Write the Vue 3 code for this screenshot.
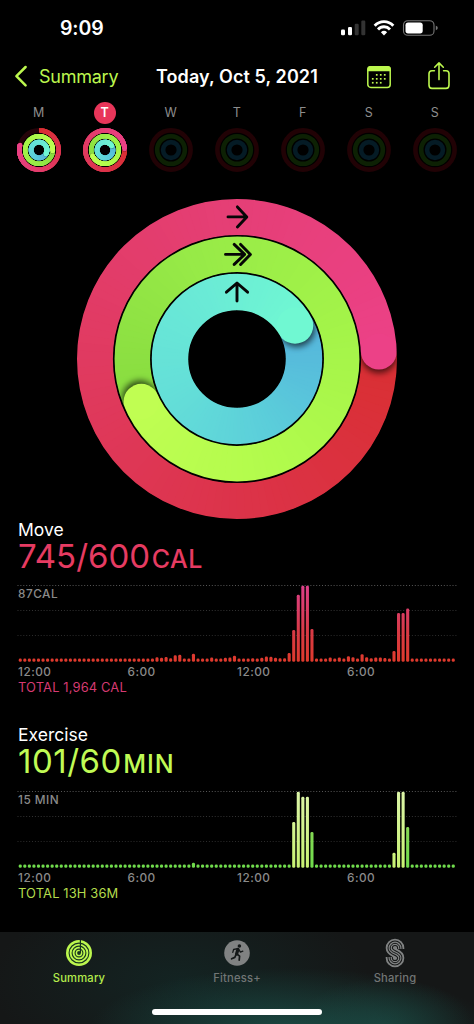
<script setup>
const PALETTE = {
  move: ['#d92f33', '#dc3349', '#e03a60', '#e53f76', '#ec4187'],
  exercise: ['#88dc40', '#97ea47', '#a3f349', '#b1fb4c', '#c0fe52'],
  stand: ['#55b4dc', '#5bcdda', '#64dfd8', '#6aead6', '#70f8d2'],
}

const rgb = (hex) => [1, 3, 5].map((i) => parseInt(hex.slice(i, i + 2), 16))

function mix(stops, t) {
  const pos = Math.min(Math.max(t, 0), 0.9999) * (stops.length - 1)
  const i = Math.floor(pos)
  const a = rgb(stops[i])
  const b = rgb(stops[i + 1])
  return `rgb(${a.map((v, k) => Math.round(v + (b[k] - v) * (pos - i))).join(',')})`
}

function polar(r, deg) {
  const a = (deg * Math.PI) / 180
  return { x: +(r * Math.sin(a)).toFixed(3), y: +(-r * Math.cos(a)).toFixed(3) }
}

function arc(r, from, to) {
  const p = polar(r, from)
  const q = polar(r, to)
  return `M${p.x} ${p.y}A${r} ${r} 0 0 1 ${q.x} ${q.y}`
}

/* Splits a progress ring into short arcs so that its colour follows the angle. */
function makeRing(name, r, w, degrees) {
  const stops = PALETTE[name]
  const start = Math.max(0, degrees - 360)
  const span = degrees - start
  const step = 3
  const overlap = r < 30 ? 8 : 2
  const parts = []
  for (let a = start; a < degrees; a += step) {
    const end = Math.min(a + step + overlap, degrees)
    parts.push({ d: arc(r, a, end), color: mix(stops, (a - start) / span) })
  }
  return {
    name, r, w, parts,
    track: { move: '#25040a', exercise: '#0d2505', stand: '#04222a' }[name],
    front: parts.slice(-20),
    cap: polar(r, degrees),
    shade: polar(r, degrees + (180 / Math.PI) * (w * 0.1 / r)),
    capColor: mix(stops, 1),
    lapped: degrees > 360,
  }
}

const bigRings = [
  makeRing('move', 142.05, 35.9, 447),
  makeRing('exercise', 104.7, 35.5, 606),
  makeRing('stand', 67, 36.5, 420),
]

const days = [
  { letter: 'M', rings: [makeRing('move', 19.6, 4.6, 285), makeRing('exercise', 13.8, 4.5, 455), makeRing('stand', 7.9, 4.9, 480)] },
  { letter: 'T', today: true, rings: [makeRing('move', 19.6, 4.6, 447), makeRing('exercise', 13.8, 4.5, 606), makeRing('stand', 7.9, 4.9, 420)] },
  { letter: 'W' },
  { letter: 'T' },
  { letter: 'F' },
  { letter: 'S' },
  { letter: 'S' },
]

function bars(base, values) {
  return Array.from({ length: 96 }, (_, i) => ({ x: 18.7 + i * 4.558, h: values[i] ?? base }))
}

const charts = [
  {
    id: 'move', title: 'Move', value: '745/600', unit: 'CAL', peak: '87CAL', total: 'TOTAL 1,964 CAL',
    bars: bars(3.2, {
      30: 4.5, 31: 4, 32: 4.8, 33: 3.5, 34: 6.5, 35: 7, 38: 8, 42: 4.2, 45: 4, 46: 4.3, 47: 6,
      51: 3.6, 53: 4, 54: 5.3, 55: 5, 56: 4, 57: 3.5, 58: 3.5, 59: 8.7, 60: 31.7, 61: 67, 62: 76, 63: 76, 64: 32.7,
      68: 4.4, 70: 4.4, 72: 5.6, 73: 4.6, 75: 7.6, 76: 4.6, 77: 3.6, 78: 4.4, 79: 4.4, 80: 3.7,
      82: 10.7, 83: 48.7, 84: 48.7, 85: 53.3,
    }),
  },
  {
    id: 'exercise', title: 'Exercise', value: '101/60', unit: 'MIN', peak: '15 MIN', total: 'TOTAL 13H 36M',
    bars: bars(3.4, { 38: 5, 60: 45.7, 61: 76, 62: 71, 63: 71, 64: 35.7, 82: 15, 83: 76, 84: 76, 85: 40.7 }),
  },
]

const brightBars = [60, 61, 62, 63, 82, 83, 84]

function barFill(id, i) {
  if (id === 'move') return 'url(#grad-move)'
  return brightBars.includes(i) ? 'url(#grad-bright)' : 'url(#grad-green)'
}

const hours = [
  { x: 18, text: '12:00' },
  { x: 127.5, text: '6:00' },
  { x: 237, text: '12:00' },
  { x: 347, text: '6:00' },
]
</script>

<template>
  <div class="phone">
    <header class="status">
      <span class="clock">9:09</span>
      <svg class="signals" width="100" height="22" viewBox="0 0 100 22">
        <rect x="1" y="11.5" width="4" height="5.7" rx="1.2" fill="#fff" />
        <rect x="8" y="9" width="4" height="8.2" rx="1.2" fill="#fff" />
        <rect x="14.7" y="5.8" width="4" height="11.4" rx="1.2" fill="#333" />
        <rect x="21.3" y="2.5" width="4" height="14.7" rx="1.2" fill="#333" />
        <g fill="none" stroke="#fff" stroke-width="2.9">
          <path d="M34.7 7.7A12.6 12.6 0 0 1 53.3 7.7" />
          <path d="M38 11.4A8.2 8.2 0 0 1 50 11.4" />
        </g>
        <path d="M44 17.5L40.9 14.2A4.6 4.6 0 0 1 47.1 14.2Z" fill="#fff" />
        <rect x="63.5" y="2.7" width="30.5" height="14.6" rx="4.4" fill="none" stroke="#767676" stroke-width="1.1" />
        <rect x="65.5" y="4.6" width="17.2" height="10.8" rx="2.6" fill="#fff" />
        <path d="M95.8 7.8Q97.8 8.4 97.8 10T95.8 12.2Z" fill="#767676" />
      </svg>
    </header>

    <nav class="nav">
      <svg class="chevron" width="14" height="24" viewBox="0 0 14 24">
        <path d="M11.6 3L2.4 12.2L11.6 21.4" fill="none" stroke="#bcf74e" stroke-width="2.5" stroke-linecap="round" stroke-linejoin="round" />
      </svg>
      <span class="back">Summary</span>
      <h1 class="date">Today, Oct 5, 2021</h1>
      <svg class="calendar" width="26" height="24" viewBox="0 0 26 24">
        <rect x="1.8" y="1.8" width="22.4" height="20.6" rx="3" fill="none" stroke="#bcf74e" stroke-width="1.5" />
        <path d="M1.2 6.2V4.2Q1.2 1.1 4.3 1.1H21.7Q24.8 1.1 24.8 4.2V6.2Z" fill="#bcf74e" />
        <g fill="#bcf74e">
          <rect v-for="n in 3" :key="'a' + n" :x="5.9 + n * 4" y="9" width="1.7" height="1.7" />
          <rect v-for="n in 4" :key="'b' + n" :x="1.9 + n * 4" y="13" width="1.7" height="1.7" />
          <rect v-for="n in 3" :key="'c' + n" :x="1.9 + n * 4" y="16.9" width="1.7" height="1.7" />
        </g>
      </svg>
      <svg class="share" width="24" height="30" viewBox="0 0 24 30">
        <g fill="none" stroke="#bcf74e" stroke-width="1.6" stroke-linecap="round" stroke-linejoin="round">
          <path d="M7.4 9.8H5Q2 9.8 2 12.8V24Q2 27.4 5 27.4H19Q22 27.4 22 24V12.8Q22 9.8 19 9.8H16.6" />
          <path d="M12 18.6V2.2M7.7 6.2L12 1.9L16.3 6.2" />
        </g>
      </svg>
    </nav>

    <section class="week">
      <div v-for="(day, i) in days" :key="i" class="day">
        <span class="letter" :class="{ today: day.today }">{{ day.letter }}</span>
        <svg width="46" height="46" viewBox="-23 -23 46 46">
          <template v-if="day.rings">
            <g v-for="ring in day.rings" :key="ring.name" fill="none" :stroke-width="ring.w">
              <circle :r="ring.r" :stroke="ring.track" />
              <path v-for="(p, k) in ring.parts" :key="k" :d="p.d" :stroke="p.color" />
              <circle v-if="ring.lapped" :cx="ring.shade.x" :cy="ring.shade.y" :r="ring.w / 2" stroke="none" fill="#000" fill-opacity=".35" />
              <path v-for="(p, k) in ring.front" :key="'f' + k" :d="p.d" :stroke="p.color" />
              <circle :cx="ring.cap.x" :cy="ring.cap.y" :r="ring.w / 2" stroke="none" :fill="ring.capColor" />
            </g>
          </template>
          <g v-else fill="none" stroke-width="4.6">
            <circle r="19.6" stroke="#210205" />
            <circle r="13.8" stroke="#0d2104" />
            <circle r="7.9" stroke="#051b25" />
          </g>
        </svg>
      </div>
    </section>

    <section class="rings">
      <svg width="322" height="322" viewBox="-161 -161 322 322">
        <defs>
          <filter id="soft" x="-50%" y="-50%" width="200%" height="200%">
            <feGaussianBlur stdDeviation="3.2" />
          </filter>
          <mask v-for="ring in bigRings" :id="'mask-' + ring.name" :key="ring.name" maskUnits="userSpaceOnUse" x="-161" y="-161" width="322" height="322">
            <circle :r="ring.r" fill="none" stroke="#fff" :stroke-width="ring.w" />
          </mask>
        </defs>
        <g v-for="ring in bigRings" :key="ring.name" :mask="`url(#mask-${ring.name})`" fill="none" :stroke-width="ring.w + 1">
          <path v-for="(p, k) in ring.parts" :key="k" :d="p.d" :stroke="p.color" />
          <circle :cx="ring.shade.x" :cy="ring.shade.y" :r="ring.w / 2" stroke="none" fill="#000" fill-opacity=".65" filter="url(#soft)" />
          <path v-for="(p, k) in ring.front" :key="'f' + k" :d="p.d" :stroke="p.color" />
          <circle :cx="ring.cap.x" :cy="ring.cap.y" :r="ring.w / 2" stroke="none" :fill="ring.capColor" />
        </g>
        <g fill="none" stroke="#060606" stroke-width="2.9" stroke-linecap="round" stroke-linejoin="round">
          <path d="M-9 -142.1H9.5M0.4 -152.1L9.8 -142.1L0.4 -132.1" />
          <path d="M-11.5 -104.6H7.5M-2.8 -114.6L7.6 -104.6L-2.8 -94.6M3.6 -114.6L13.4 -104.6L3.6 -94.6" />
          <path d="M0 -57.9V-75.4M-10.6 -66.8L0 -76L10.6 -66.8" />
        </g>
      </svg>
    </section>

    <section v-for="chart in charts" :key="chart.id" class="metric" :class="chart.id">
      <h2 class="name">{{ chart.title }}</h2>
      <p class="value">{{ chart.value }}<span class="unit">{{ chart.unit }}</span></p>
      <svg class="chart" width="474" height="108" viewBox="0 0 474 108">
        <defs>
          <linearGradient id="grad-move" gradientUnits="userSpaceOnUse" x1="0" y1="90" x2="0" y2="14">
            <stop offset="0" stop-color="#e03a2c" />
            <stop offset=".4" stop-color="#d83a45" />
            <stop offset="1" stop-color="#dc3f88" />
          </linearGradient>
          <linearGradient id="grad-green" gradientUnits="userSpaceOnUse" x1="0" y1="90" x2="0" y2="50">
            <stop offset="0" stop-color="#6fdc4c" />
            <stop offset="1" stop-color="#86d854" />
          </linearGradient>
          <linearGradient id="grad-bright" gradientUnits="userSpaceOnUse" x1="0" y1="90" x2="0" y2="14">
            <stop offset="0" stop-color="#c8f272" />
            <stop offset="1" stop-color="#dcf5a8" />
          </linearGradient>
        </defs>
        <g stroke-width="1" stroke-dasharray="1 1.9">
          <path d="M17.5 13.5H457" stroke="#575757" />
          <path d="M17.5 38.5H457" stroke="#333" />
          <path d="M17.5 63.5H457" stroke="#2c2c2c" />
        </g>
        <text class="peak" x="18" y="26">{{ chart.peak }}</text>
        <rect v-for="(b, i) in chart.bars" :key="i" :x="b.x" :y="89.8 - b.h" width="3.1" :height="b.h" rx="1.4" :fill="barFill(chart.id, i)" />
        <text v-for="(h, i) in hours" :key="'h' + i" class="hour" :x="h.x" y="104.4">{{ h.text }}</text>
      </svg>
      <p class="total">{{ chart.total }}</p>
    </section>

    <footer class="tabs">
      <div class="tab active">
        <svg width="28" height="30" viewBox="-14 -15 28 30">
          <circle r="13" fill="#bcf74e" />
          <g fill="none" stroke="#17331f" stroke-width="1.1">
            <circle r="9.9" />
            <circle r="6.9" />
            <circle r="3.9" />
          </g>
          <circle r="1.9" fill="#17331f" />
          <path d="M1.4 -13V0" stroke="#17331f" stroke-width="1.2" />
        </svg>
        <span>Summary</span>
      </div>
      <div class="tab">
        <svg width="28" height="30" viewBox="-14 -15 28 30">
          <circle r="12.8" fill="#808282" />
          <circle cx="2.4" cy="-7" r="1.8" fill="#141818" />
          <g fill="none" stroke="#141818" stroke-linecap="round" stroke-linejoin="round">
            <path d="M0.9 -3.6L-0.4 1" stroke-width="3.2" />
            <path d="M0.6 -4.4L-3.4 -3.5L-4.2 -0.6M1.9 -3.4L3.4 -0.9L5.8 -1.8" stroke-width="1.3" />
            <path d="M0.1 1.2L2.6 3.2L2.2 7.2M-1 1.6L-2.2 4.4L-5.4 5.8" stroke-width="1.7" />
          </g>
        </svg>
        <span>Fitness+</span>
      </div>
      <div class="tab">
        <svg width="28" height="30" viewBox="-5 -1 28 30">
          <mask id="track-lines" maskUnits="userSpaceOnUse" x="-2" y="-2" width="22" height="32">
            <g fill="none">
              <path v-for="(w, i) in [9, 5.4, 3.4]" :key="i" :stroke-width="w" :stroke="i % 2 ? '#000' : '#fff'" d="M13.8 9.9V9.1A4.8 4.8 0 0 0 4.2 9.1C4.2 14.8 13.8 13.2 13.8 18.9A4.8 4.8 0 0 1 4.2 18.9V18.1" />
              <path stroke="#000" stroke-width="1" d="M13.8 9.9V9.1A4.8 4.8 0 0 0 4.2 9.1C4.2 14.8 13.8 13.2 13.8 18.9A4.8 4.8 0 0 1 4.2 18.9V18.1" />
            </g>
          </mask>
          <rect x="-2" y="-2" width="22" height="32" fill="#808282" mask="url(#track-lines)" />
        </svg>
        <span>Sharing</span>
      </div>
      <div class="home"></div>
    </footer>
  </div>
</template>

<style>
html,
body {
  margin: 0;
  background: #000;
}
</style>

<style scoped>
.phone {
  width: 474px;
  height: 1024px;
  overflow: hidden;
  display: flex;
  flex-direction: column;
  background: #000;
  color: #fff;
  font-family: Inter, 'Liberation Sans', sans-serif;
}
h1,
h2,
p {
  margin: 0;
  font-weight: 400;
}
svg {
  display: block;
  flex: none;
}
.status {
  height: 56px;
  flex: none;
  display: flex;
  justify-content: space-between;
  box-sizing: border-box;
  padding: 18px 34px 0 60px;
}
.clock {
  font-size: 19.5px;
  line-height: 21px;
  font-weight: 600;
  letter-spacing: -0.1px;
}
.nav {
  height: 42px;
  flex: none;
  display: flex;
  align-items: center;
  padding-left: 14px;
  line-height: 42px;
}
.chevron {
  margin-top: -2px;
}
.back {
  width: 117px;
  padding-left: 11px;
  box-sizing: border-box;
  margin-right: 11px;
  font-size: 18px;
  letter-spacing: -0.25px;
  color: #bcf74e;
}
.date {
  width: 210px;
  font-size: 18px;
  font-weight: 600;
  letter-spacing: 0.08px;
  white-space: nowrap;
}
.share {
  margin-left: 35px;
  margin-top: -3px;
}
.week {
  height: 96px;
  flex: none;
  display: flex;
  padding-left: 5.7px;
}
.day {
  width: 66px;
  flex: none;
  display: flex;
  flex-direction: column;
  align-items: center;
  padding-top: 4px;
}
.letter {
  width: 22px;
  height: 22px;
  border-radius: 50%;
  line-height: 22px;
  text-align: center;
  font-size: 12.5px;
  color: #8d8d8d;
  margin-bottom: 3px;
}
.letter.today {
  background: #e8365a;
  color: #fff;
  font-weight: 600;
}
.rings {
  height: 325.6px;
  flex: none;
  display: flex;
  justify-content: center;
  align-items: flex-start;
}
.rings svg {
  margin-top: 3.8px;
}
.metric {
  height: 205.8px;
  flex: none;
}
.name {
  padding-left: 18px;
  font-size: 17.5px;
  line-height: 20px;
}
.value {
  padding-left: 18px;
  height: 32.4px;
  font-size: 33px;
  line-height: 33.4px;
  white-space: nowrap;
}
.unit {
  font-size: 25px;
  font-weight: 500;
  margin-left: 1.5px;
  letter-spacing: 0.6px;
}
.move .value {
  color: #e63b62;
}
.exercise .value {
  color: #c0fb55;
  letter-spacing: 0.5px;
}
.exercise .unit {
  letter-spacing: 0.9px;
}
.peak,
.hour {
  font-size: 11.8px;
  font-weight: 500;
  letter-spacing: 0.5px;
  fill: #8a8a8a;
}
.total {
  padding-left: 18px;
  font-size: 12.9px;
  line-height: 15.4px;
  letter-spacing: 0.15px;
}
.move .total {
  color: #d63a72;
}
.exercise .total {
  color: #b3dc4c;
}
.tabs {
  height: 92px;
  margin-top: auto;
  flex: none;
  position: relative;
  display: flex;
  background:
    radial-gradient(ellipse 200px 60px at 290px 96px, rgba(28, 86, 78, 0.75), rgba(28, 86, 78, 0) 100%),
    radial-gradient(ellipse 90px 50px at 385px 96px, rgba(28, 86, 78, 0.5), rgba(28, 86, 78, 0) 100%),
    radial-gradient(ellipse 190px 90px at 180px 50px, rgba(18, 44, 42, 0.6), rgba(18, 44, 42, 0) 100%),
    #151717;
}
.tab {
  width: 158px;
  display: flex;
  flex-direction: column;
  align-items: center;
  padding-top: 6px;
  font-size: 11.2px;
  font-weight: 500;
  line-height: 14px;
  letter-spacing: 0.2px;
  color: #717575;
}
.tab span {
  margin-top: 3px;
}
.tab.active {
  color: #b4ec4c;
}
.home {
  position: absolute;
  left: 152px;
  bottom: 9px;
  width: 170px;
  height: 6px;
  border-radius: 3px;
  background: #fff;
}
</style>
